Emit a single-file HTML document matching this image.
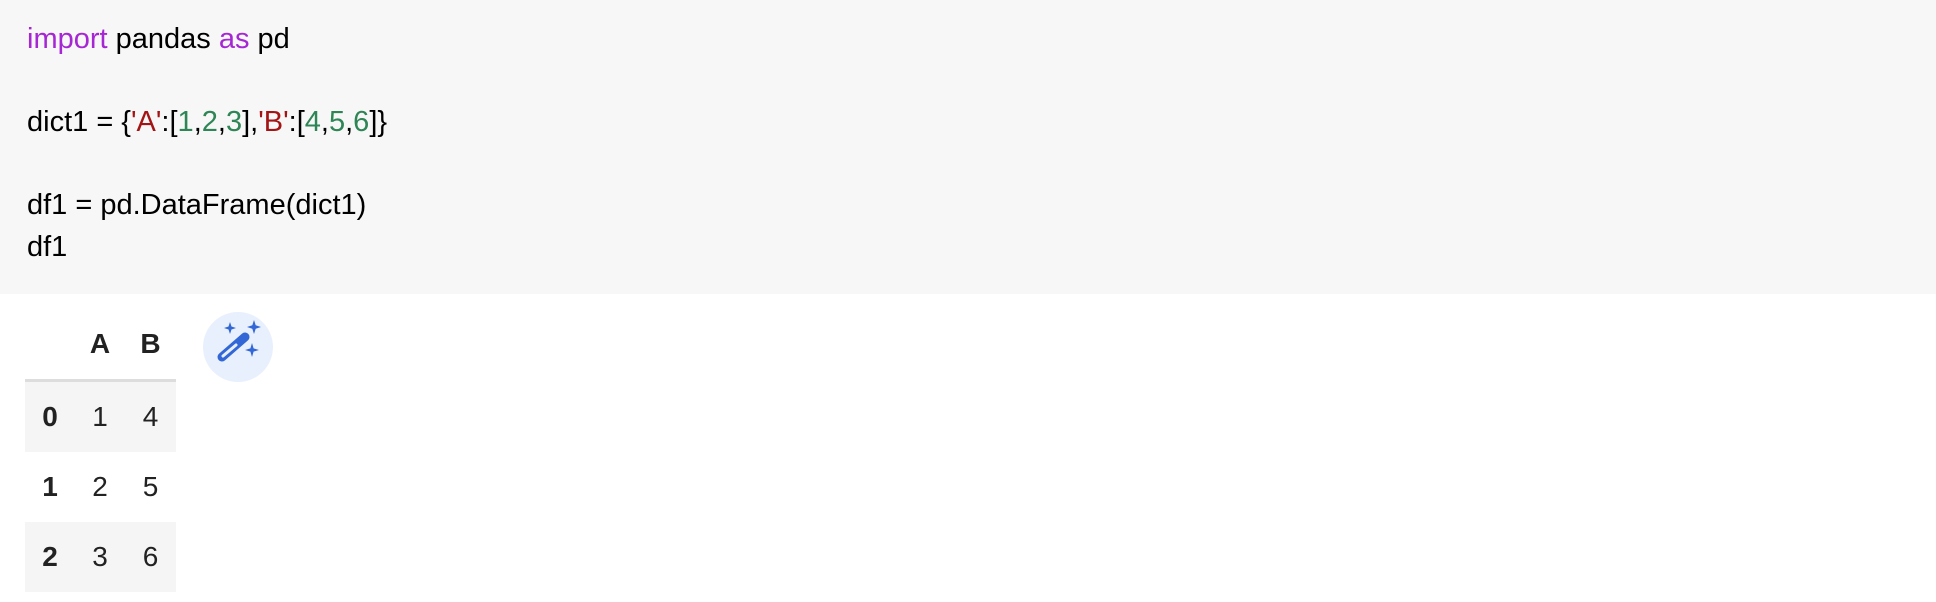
<!DOCTYPE html>
<html><head><meta charset="utf-8"><style>
html,body{margin:0;padding:0;background:#fff;width:1936px;height:602px;overflow:hidden;font-family:"Liberation Sans","NanumGothic",sans-serif;}
.code{position:absolute;left:0;top:0;width:1936px;height:294px;background:#f7f7f7;}
.code pre{margin:0;position:absolute;left:27px;top:19px;font-family:"Liberation Sans","NanumGothic",sans-serif;font-size:29px;line-height:41.5px;color:#000;}
.k{color:#a626d4}.s{color:#a31515}.n{color:#2e8555}
table{position:absolute;left:25px;top:309px;border-collapse:collapse;font-size:28px;color:#222;}
td,th{height:70px;padding:0;text-align:center;}
th{font-weight:bold;}
thead th{height:70px;border-bottom:3px solid #ddd;}
.c0{width:50px}
.c1{width:50px}
.c2{width:51px}
tbody tr:nth-child(odd){background:#f5f5f5}
</style></head><body>
<div class="code"><pre><span class="k">import</span> pandas <span class="k">as</span> pd

dict1 = {<span class="s">'A'</span>:[<span class="n">1</span>,<span class="n">2</span>,<span class="n">3</span>],<span class="s">'B'</span>:[<span class="n">4</span>,<span class="n">5</span>,<span class="n">6</span>]}

df1 = pd.DataFrame(dict1)
df1</pre></div>
<table>
<thead><tr><th class="c0"></th><th class="c1">A</th><th class="c2">B</th></tr></thead>
<tbody>
<tr><th class="c0">0</th><td class="c1">1</td><td class="c2">4</td></tr>
<tr><th class="c0">1</th><td class="c1">2</td><td class="c2">5</td></tr>
<tr><th class="c0">2</th><td class="c1">3</td><td class="c2">6</td></tr>
</tbody></table>
<svg style="position:absolute;left:203px;top:312px" width="70" height="70" viewBox="0 0 70 70">
<circle cx="35" cy="35" r="35" fill="#e8f0fe"/>
<line x1="19" y1="45" x2="42" y2="25" stroke="#3367d6" stroke-width="9" stroke-linecap="round"/>
<line x1="20" y1="44" x2="33" y2="33" stroke="#e8f0fe" stroke-width="3" stroke-linecap="round"/>
<path d="M27 10 L28.5 14.5 L33 16 L28.5 17.5 L27 22 L25.5 17.5 L21 16 L25.5 14.5 Z" fill="#3367d6"/>
<path d="M51 8 L52.7 13.3 L58 15 L52.7 16.7 L51 22 L49.3 16.7 L44 15 L49.3 13.3 Z" fill="#3367d6"/>
<path d="M49 31 L50.6 36.4 L56 38 L50.6 39.6 L49 45 L47.4 39.6 L42 38 L47.4 36.4 Z" fill="#3367d6"/>
</svg>
</body></html>
